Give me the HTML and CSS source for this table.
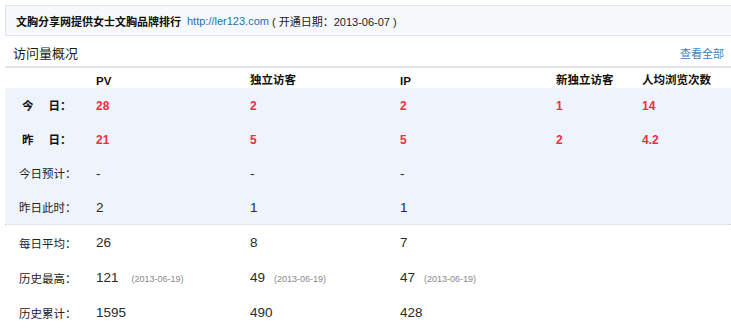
FILE: index.html
```html
<!DOCTYPE html>
<html lang="zh-CN">
<head>
<meta charset="utf-8">
<title>访问量概况</title>
<link rel="stylesheet" href="styles.css">
</head>
<body>
<div class="page">
  <div class="site-bar">
    <span class="site-name">文胸分享网提供女士文胸品牌排行</span>
    <a class="site-link" href="#">http://ler123.com</a>
    <span class="site-date">( 开通日期：2013-06-07 )</span>
  </div>
  <div class="section-head">
    <h2 class="section-title">访问量概况</h2>
    <a class="more" href="#">查看全部</a>
  </div>
  <div class="stats">
    <div class="row head">
      <div class="c c0"></div>
      <div class="c c1">PV</div>
      <div class="c c2">独立访客</div>
      <div class="c c3">IP</div>
      <div class="c c4">新独立访客</div>
      <div class="c c5">人均浏览次数</div>
    </div>
    <div class="block blue">
      <div class="row">
        <div class="c c0 lbl strong"><span class="sp">今</span>日：</div>
        <div class="c c1 red">28</div>
        <div class="c c2 red">2</div>
        <div class="c c3 red">2</div>
        <div class="c c4 red">1</div>
        <div class="c c5 red">14</div>
      </div>
      <div class="row">
        <div class="c c0 lbl strong"><span class="sp">昨</span>日：</div>
        <div class="c c1 red">21</div>
        <div class="c c2 red">5</div>
        <div class="c c3 red">5</div>
        <div class="c c4 red">2</div>
        <div class="c c5 red">4.2</div>
      </div>
      <div class="row">
        <div class="c c0 lbl">今日预计：</div>
        <div class="c c1 val">-</div>
        <div class="c c2 val">-</div>
        <div class="c c3 val">-</div>
        <div class="c c4"></div>
        <div class="c c5"></div>
      </div>
      <div class="row">
        <div class="c c0 lbl">昨日此时：</div>
        <div class="c c1 val">2</div>
        <div class="c c2 val">1</div>
        <div class="c c3 val">1</div>
        <div class="c c4"></div>
        <div class="c c5"></div>
      </div>
    </div>
    <div class="block white">
      <div class="row tall">
        <div class="c c0 lbl">每日平均：</div>
        <div class="c c1 val">26</div>
        <div class="c c2 val">8</div>
        <div class="c c3 val">7</div>
        <div class="c c4"></div>
        <div class="c c5"></div>
      </div>
      <div class="row tall">
        <div class="c c0 lbl">历史最高：</div>
        <div class="c c1 val">121<span class="date wide">(2013-06-19)</span></div>
        <div class="c c2 val">49<span class="date">(2013-06-19)</span></div>
        <div class="c c3 val">47<span class="date">(2013-06-19)</span></div>
        <div class="c c4"></div>
        <div class="c c5"></div>
      </div>
      <div class="row tall">
        <div class="c c0 lbl">历史累计：</div>
        <div class="c c1 val">1595</div>
        <div class="c c2 val">490</div>
        <div class="c c3 val">428</div>
        <div class="c c4"></div>
        <div class="c c5"></div>
      </div>
    </div>
  </div>
</div>
</body>
</html>
```
FILE: styles.css
```css
html, body {
  margin: 0;
  padding: 0;
  background: #ffffff;
  overflow: hidden;
}
body {
  font-family: "Liberation Sans", "Noto Sans CJK SC", sans-serif;
  color: #333333;
}
.page {
  padding: 5px 0 0 5px;
}
.site-bar {
  height: 29px;
  border: 1px solid #dfe5ee;
  border-right: none;
  background: #f6f8fb;
  display: flex;
  align-items: center;
  padding-left: 10px;
  font-size: 11px;
  color: #222222;
}
.site-name {
  font-weight: bold;
  color: #111111;
}
.site-link {
  color: #1f6fb5;
  text-decoration: none;
  margin-left: 6px;
  margin-right: 3px;
}
.site-date {
  color: #222222;
}
.section-head {
  display: flex;
  align-items: center;
  justify-content: space-between;
  height: 30px;
  padding: 0 7px 0 8px;
}
.section-title {
  margin: 0;
  font-size: 13px;
  font-weight: normal;
  color: #1a1a1a;
  line-height: 1;
  padding-top: 5px;
}
.more {
  font-size: 11px;
  color: #3a80b8;
  text-decoration: none;
  padding-top: 4px;
}
.stats {
  border-top: 2px solid #dde3ec;
}
.row {
  display: flex;
  align-items: center;
  height: 34px;
}
.row.head {
  height: 19px;
  align-items: flex-end;
  padding-bottom: 1px;
  font-weight: bold;
  font-size: 11.5px;
  color: #111111;
}
.row.tall {
  height: 35px;
}
.block.blue {
  background: #eef3fc;
  border-bottom: 1px dotted #cfd5dd;
}
.c {
  flex: none;
  white-space: nowrap;
}
.c0 { width: 91px; }
.c1 { width: 154px; }
.c2 { width: 150px; }
.c3 { width: 156px; }
.c4 { width: 86px; }
.c5 { flex: 1; }
.lbl {
  box-sizing: border-box;
  padding-left: 14px;
  font-size: 11.5px;
  color: #222222;
}
.lbl.strong {
  padding-left: 17px;
  font-weight: bold;
  color: #111111;
}
.sp {
  margin-right: 15px;
}
.red {
  color: #e8333b;
  font-weight: bold;
  font-size: 12px;
  padding-top: 1px;
}
.val {
  font-size: 13.5px;
  color: #2a2a2a;
}
.date {
  font-size: 9px;
  color: #888888;
  margin-left: 9px;
}
.date.wide {
  margin-left: 13px;
}
```
